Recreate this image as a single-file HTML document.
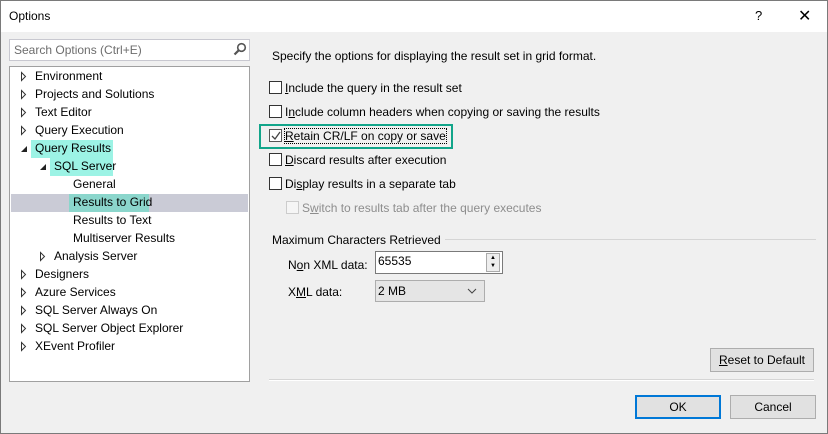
<!DOCTYPE html>
<html><head><meta charset="utf-8"><style>
*{box-sizing:border-box;margin:0;padding:0}
body{width:828px;height:434px;overflow:hidden;font-family:"Liberation Sans",sans-serif;font-size:12px;color:#000;background:#f0f0f0;position:relative}
.win{position:absolute;left:0;top:0;width:828px;height:434px;border:1px solid #7a7a7a;background:#f0f0f0}
.title{position:absolute;left:0;top:0;width:826px;height:31px;background:#fff}
.abs{position:absolute;white-space:nowrap}
.cb{position:absolute;width:13px;height:13px;border:1px solid #333;background:#fff}
.btn{position:absolute;height:24px;border:1px solid #adadad;background:#e1e1e1;text-align:center;line-height:22px}
u{text-decoration:underline}
</style></head><body>
<div class="win">
<div class="title"></div>
<div class="abs" style="left:8px;top:8px">Options</div>
<div class="abs" style="left:754px;top:7px;font-size:13px">?</div>
<div class="abs" style="left:797px;top:5px;font-size:16px">✕</div>

<div class="abs" style="left:8px;top:38px;width:241px;height:22px;border:1px solid #c8c8d0;background:#fff;color:#6d6d6d;padding:3px 4px">Search Options (Ctrl+E)</div>
<svg class="abs" style="left:232px;top:41px" width="14" height="14"><circle cx="8.5" cy="5.5" r="3.8" fill="none" stroke="#555" stroke-width="1.6"/><line x1="5.7" y1="8.3" x2="1.5" y2="12.5" stroke="#555" stroke-width="2.2"/></svg>

<div class="abs" style="left:8px;top:65px;width:241px;height:316px;border:1px solid #a0a0a0;background:#fff"></div>
<div class="abs" style="left:10px;top:193px;width:237px;height:18px;background:#cacbd6"></div>
<div class="abs" style="left:30px;top:139px;width:82px;height:18px;background:#9cf3e5"></div>
<div class="abs" style="left:49px;top:157px;width:63px;height:18px;background:#9cf3e5"></div>
<div class="abs" style="left:68px;top:193px;width:80px;height:18px;background:#8bd6cc"></div>

<div class="abs" style="left:34px;top:66px;line-height:18px">Environment<br>Projects and Solutions<br>Text Editor<br>Query Execution<br>Query Results</div>
<div class="abs" style="left:53px;top:156px;line-height:18px">SQL Server</div>
<div class="abs" style="left:72px;top:174px;line-height:18px">General<br>Results to Grid<br>Results to Text<br>Multiserver Results</div>
<div class="abs" style="left:53px;top:246px;line-height:18px">Analysis Server</div>
<div class="abs" style="left:34px;top:264px;line-height:18px">Designers<br>Azure Services<br>SQL Server Always On<br>SQL Server Object Explorer<br>XEvent Profiler</div>
<svg class="abs" style="left:0;top:0" width="250" height="380">
<g fill="#fff" stroke="#333" stroke-width="1">
<path d="M20.5 71.5v8l4-4z"/><path d="M20.5 89.5v8l4-4z"/><path d="M20.5 107.5v8l4-4z"/><path d="M20.5 125.5v8l4-4z"/>
<path d="M39.5 251.5v8l4-4z"/>
<path d="M20.5 269.5v8l4-4z"/><path d="M20.5 287.5v8l4-4z"/><path d="M20.5 305.5v8l4-4z"/><path d="M20.5 323.5v8l4-4z"/><path d="M20.5 341.5v8l4-4z"/>
</g>
<path d="M20 151h6v-6z" fill="#222"/><path d="M39 169h6v-6z" fill="#222"/>
</svg>

<div class="abs" style="left:271px;top:48px">Specify the options for displaying the result set in grid format.</div>
<div class="cb" style="left:268px;top:80px"></div><div class="abs" style="left:284px;top:80px"><u>I</u>nclude the query in the result set</div>
<div class="cb" style="left:268px;top:104px"></div><div class="abs" style="left:284px;top:104px">I<u>n</u>clude column headers when copying or saving the results</div>
<div class="cb" style="left:268px;top:128px;border-color:#555"></div>
<svg class="abs" style="left:269px;top:129px" width="12" height="12"><path d="M2 6l3 3 5-7" fill="none" stroke="#444" stroke-width="1.3"/></svg>
<div class="abs" style="left:284px;top:128px;outline:1px dotted #000"><u>R</u>etain CR/LF on copy or save</div>
<div class="abs" style="left:258px;top:123px;width:194px;height:25px;border:2px solid #12a58a"></div>
<div class="cb" style="left:268px;top:152px"></div><div class="abs" style="left:284px;top:152px"><u>D</u>iscard results after execution</div>
<div class="cb" style="left:268px;top:176px"></div><div class="abs" style="left:284px;top:176px">Di<u>s</u>play results in a separate tab</div>
<div class="cb" style="left:285px;top:200px;border-color:#ccc;background:#f5f5f5"></div><div class="abs" style="left:301px;top:200px;color:#8d8d8d">S<u>w</u>itch to results tab after the query executes</div>

<div class="abs" style="left:271px;top:232px">Maximum Characters Retrieved</div>
<div class="abs" style="left:444px;top:238px;width:371px;height:1px;background:#d5d5d5"></div>
<div class="abs" style="left:287px;top:257px">N<u>o</u>n XML data:</div>
<div class="abs" style="left:374px;top:250px;width:128px;height:23px;border:1px solid #7a7a7a;background:#fff;padding:2px 2px">65535</div>
<div class="abs" style="left:485px;top:252px;width:14px;height:19px;border:1px solid #aaa;background:#eee;font-size:6px;line-height:8px;text-align:center">▲<br>▼</div>
<div class="abs" style="left:287px;top:284px">X<u>M</u>L data:</div>
<div class="abs" style="left:374px;top:279px;width:110px;height:22px;border:1px solid #adadad;background:#e5e5e5;padding:3px 2px">2 MB</div>
<svg class="abs" style="left:466px;top:287px" width="10" height="6"><path d="M1 1l4 4 4-4" fill="none" stroke="#444"/></svg>

<div class="btn" style="left:709px;top:347px;width:104px"><u>R</u>eset to Default</div>
<div class="abs" style="left:268px;top:378px;width:545px;height:1px;background:#d5d5d5"></div>
<div class="abs" style="left:268px;top:379px;width:545px;height:1px;background:#fff"></div>
<div class="btn" style="left:634px;top:394px;width:86px;border:2px solid #0078d7;line-height:20px">OK</div>
<div class="btn" style="left:729px;top:394px;width:86px">Cancel</div>
</div>
</body></html>
